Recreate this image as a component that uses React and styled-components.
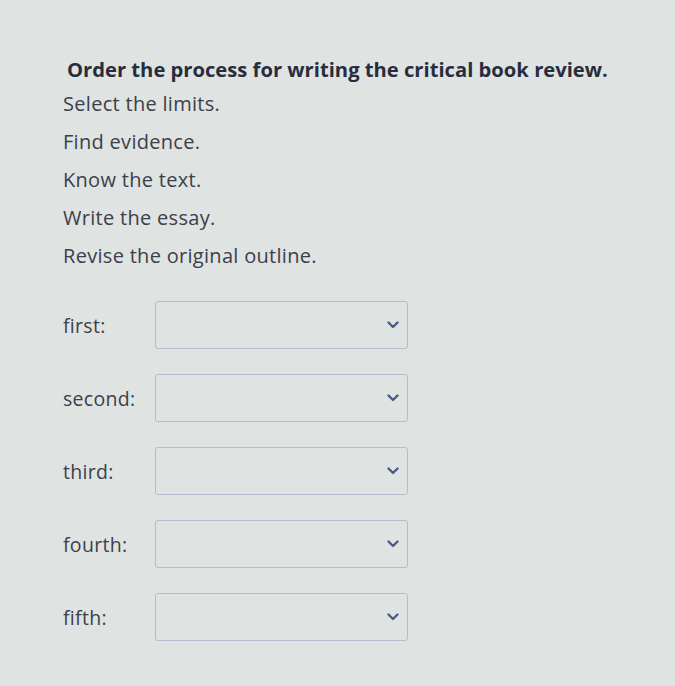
import styled, { createGlobalStyle } from 'styled-components';

const GlobalStyle = createGlobalStyle`
  html, body {
    margin: 0;
    background: #dfe3e1;
  }
`;

const steps = [
  'Select the limits.',
  'Find evidence.',
  'Know the text.',
  'Write the essay.',
  'Revise the original outline.',
];

const slots = ['first', 'second', 'third', 'fourth', 'fifth'];

function Chevron() {
  return (
    <svg width="12" height="8" viewBox="0 0 12 8">
      <path
        d="M1.5 1.5 L6 6 L10.5 1.5"
        fill="none"
        stroke="#4b5a86"
        strokeWidth="2.4"
        strokeLinecap="round"
        strokeLinejoin="round"
      />
    </svg>
  );
}

function App() {
  return (
    <>
      <GlobalStyle />
      <Page>
        <Title>Order the process for writing the critical book review.</Title>
        <StepList>
          {steps.map((s) => (
            <Step key={s}>{s}</Step>
          ))}
        </StepList>
        <Answers>
          {slots.map((slot) => (
            <AnswerRow key={slot}>
              <Label>{slot}:</Label>
              <SelectBox>
                <Chevron />
              </SelectBox>
            </AnswerRow>
          ))}
        </Answers>
      </Page>
    </>
  );
}

export default App;

const Page = styled.div`
  width: 675px;
  height: 686px;
  box-sizing: border-box;
  padding: 56px 0 0 63px;
  font-family: 'Open Sans', Lato, sans-serif;
  color: #3b404b;
`;

const Title = styled.h1`
  margin: 0 0 0 4px;
  font-size: 20.2px;
  font-weight: 700;
  color: #282d3d;
  line-height: 26px;
`;

const StepList = styled.div`
  display: flex;
  flex-direction: column;
  gap: 11px;
  margin-top: 8px;
`;

const Step = styled.div`
  font-size: 20px;
  letter-spacing: 0.3px;
  line-height: 27px;
`;

const Answers = styled.div`
  display: flex;
  flex-direction: column;
  gap: 25px;
  margin-top: 32px;
`;

const AnswerRow = styled.div`
  display: flex;
  align-items: center;
`;

const Label = styled.div`
  width: 92px;
  font-size: 19.5px;
  letter-spacing: 0.3px;
`;

const SelectBox = styled.div`
  width: 253px;
  height: 48px;
  box-sizing: border-box;
  border: 1.5px solid #b6bcd0;
  border-radius: 3px;
  display: flex;
  align-items: center;
  justify-content: flex-end;
  padding-right: 8px;
`;
